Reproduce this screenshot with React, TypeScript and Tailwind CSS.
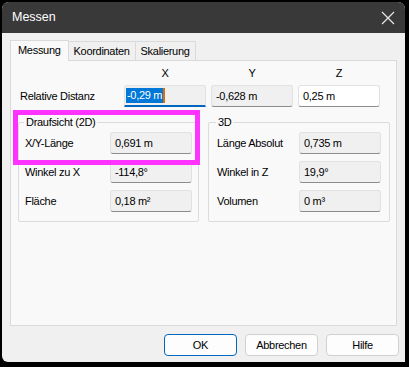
import React from 'react';

const Field: React.FC<{ value: React.ReactNode; white?: boolean; width?: string }> = ({ value, white = false, width = 'w-[82px]' }) => (
  <div
    className={`${width} h-[22px] flex items-center pl-[4px] rounded-[3px] border border-[#e1e1e1] border-b-[#8c8c8c] ${white ? 'bg-white' : 'bg-[#f0f0f0]'}`}
  >
    {value}
  </div>
);

const Row: React.FC<{ label: string; value: React.ReactNode; labelWidth: string }> = ({ label, value, labelWidth }) => (
  <div className="flex items-center">
    <span className={labelWidth}>{label}</span>
    <Field value={value} />
  </div>
);

const Group: React.FC<{ title: string; width: string; children: React.ReactNode; padLeft: string }> = ({ title, width, children, padLeft }) => (
  <div className={`${width} h-[100px] border border-[#dcdcdc] rounded-[2px] ${padLeft}`}>
    <div className="-mt-[8px] h-[14px] flex items-center">
      <span className="bg-[#f9f9f9] px-[2px] -ml-[1px] leading-none">{title}</span>
    </div>
    <div className="flex flex-col gap-[7px] mt-[3px]">{children}</div>
  </div>
);

const Button: React.FC<{ label: string; primary?: boolean }> = ({ label, primary = false }) => (
  <div
    className={`w-[73px] h-[22px] flex items-center justify-center rounded-[4px] bg-[#fdfdfd] border ${primary ? 'border-[#0067c0]' : 'border-[#d0d0d0]'}`}
  >
    {label}
  </div>
);

export default function App() {
  return (
    <div
      className="w-[409px] h-[367px] bg-black pt-[2px] pl-[2px] text-[11px] tracking-[-0.3px] text-black"
      style={{ fontFamily: '"Liberation Sans", Arial, sans-serif' }}
    >
      <div className="w-[403px] h-[360px] flex flex-col rounded-t-[7px] rounded-bl-[6px] overflow-hidden bg-[#f0f0f0]">
        {/* title bar */}
        <div className="h-[31px] bg-[#393939] flex items-center justify-between pl-[10px] pr-[10px]">
          <span className="text-white text-[12.5px] tracking-normal">Messen</span>
          <svg width="14" height="14" viewBox="0 0 14 14">
            <path d="M1 1 L13 13 M13 1 L1 13" stroke="#e8e8e8" strokeWidth="1.2" />
          </svg>
        </div>

        {/* tabs */}
        <div className="flex items-end pl-[8px] pt-[6px] h-[27px]">
          <div className="h-[21px] px-[7px] flex items-center bg-[#f9f9f9] border border-[#dadada] border-b-0 relative z-10 -mb-[1px] pb-[2px]">
            Messung
          </div>
          <div className="h-[19px] px-[5px] flex items-center bg-[#f0f0f0] border border-[#dadada] border-b-0 border-l-0">
            Koordinaten
          </div>
          <div className="h-[19px] px-[5px] flex items-center bg-[#f0f0f0] border border-[#dadada] border-b-0 border-l-0">
            Skalierung
          </div>
        </div>

        {/* panel */}
        <div className="mx-[8px] h-[266px] bg-[#f9f9f9] border border-[#dadada] pl-[9px] relative">
          {/* column headers */}
          <div className="flex mt-[5px] h-[14px] items-center">
            <div className="w-[104px]" />
            <div className="w-[82px] text-center">X</div>
            <div className="w-[5px]" />
            <div className="w-[82px] text-center">Y</div>
            <div className="w-[5px]" />
            <div className="w-[82px] text-center">Z</div>
          </div>

          {/* relative distance */}
          <div className="flex items-center mt-[5px] gap-[5px]">
            <span className="w-[99px]">Relative Distanz</span>
            <div className="w-[82px] h-[22px] flex items-center pl-[1px] rounded-t-[3px] bg-[#f0f0f0] border border-[#e1e1e1] border-b-2 border-b-[#0067c0]">
              <span className="bg-[#0078d7] text-white px-[1px] leading-[15px]">-0,29 m</span>
              <span className="w-[2px] h-[15px] bg-[#e06c00]" />
            </div>
            <Field value="-0,628 m" />
            <Field value="0,25 m" white />
          </div>

          {/* groups */}
          <div className="flex gap-[9px] mt-[15px] ml-[-2px]">
            <Group title="Draufsicht (2D)" width="w-[181px]" padLeft="pl-[6px]">
              <Row label="X/Y-Länge" value="0,691 m" labelWidth="w-[85px]" />
              <Row label="Winkel zu X" value="-114,8°" labelWidth="w-[85px]" />
              <Row label="Fläche" value="0,18 m²" labelWidth="w-[85px]" />
            </Group>
            <Group title="3D" width="w-[182px]" padLeft="pl-[8px]">
              <Row label="Länge Absolut" value="0,735 m" labelWidth="w-[82px]" />
              <Row label="Winkel in Z" value="19,9°" labelWidth="w-[82px]" />
              <Row label="Volumen" value="0 m³" labelWidth="w-[82px]" />
            </Group>
          </div>

          {/* annotation highlight */}
          <div className="absolute left-[2px] top-[49px] w-[187px] h-[55px] border-[5px] border-[#ff33ff] pointer-events-none" />
        </div>

        {/* buttons */}
        <div className="flex justify-end gap-[8px] pr-[6px] mt-[8px]">
          <Button label="OK" primary />
          <Button label="Abbrechen" />
          <Button label="Hilfe" />
        </div>
      </div>
    </div>
  );
}
